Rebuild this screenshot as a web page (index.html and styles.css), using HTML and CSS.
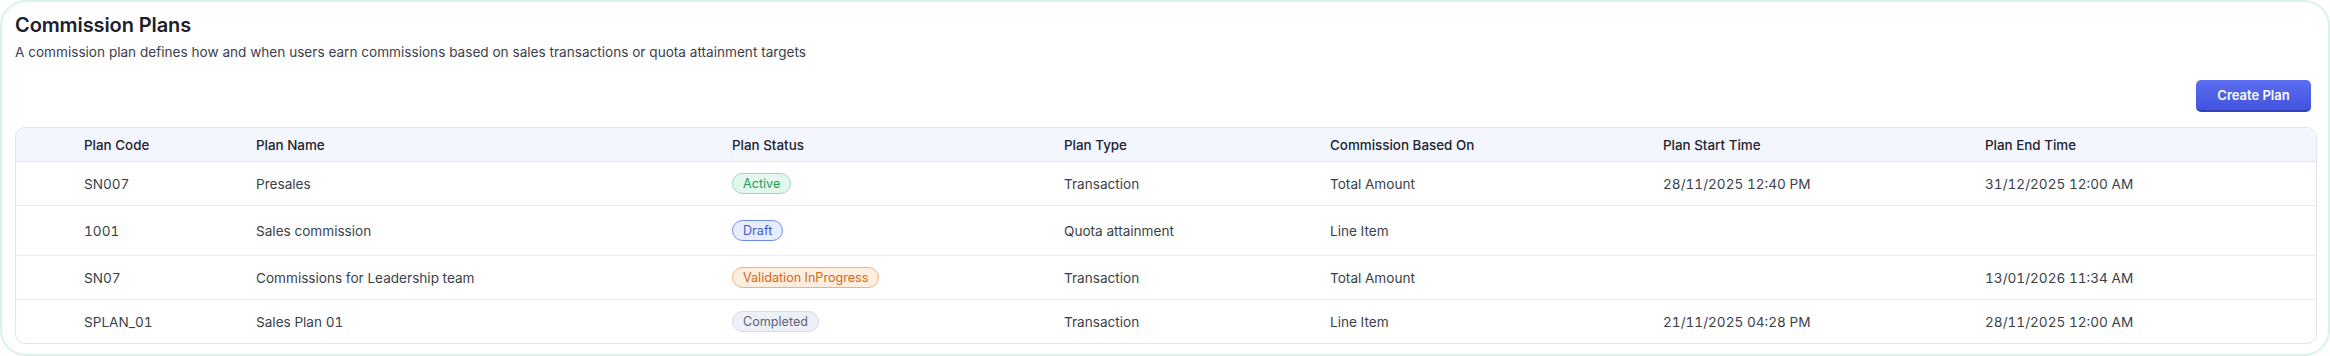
FILE: index.html
```html
<!DOCTYPE html>
<html>
    <head>
        <title>Commission Plans</title>
        <link rel="stylesheet" href="styles.css">
    </head>
    <body>
        <div class="card">
            <h1 class="pageTitle">Commission Plans</h1>
            <p class="pageDesc">A commission plan defines how and when users earn commissions based on sales transactions or quota attainment targets</p>

            <div class="toolbar">
                <button class="primaryBtn">Create Plan</button>
            </div>

            <div class="planTable">
                <div class="row head">
                    <div></div>
                    <div>Plan Code</div>
                    <div>Plan Name</div>
                    <div>Plan Status</div>
                    <div>Plan Type</div>
                    <div>Commission Based On</div>
                    <div>Plan Start Time</div>
                    <div>Plan End Time</div>
                </div>
                <div class="row">
                    <div></div>
                    <div>SN007</div>
                    <div>Presales</div>
                    <div><span class="badge active">Active</span></div>
                    <div>Transaction</div>
                    <div>Total Amount</div>
                    <div>28/11/2025 12:40 PM</div>
                    <div>31/12/2025 12:00 AM</div>
                </div>
                <div class="row tall">
                    <div></div>
                    <div>1001</div>
                    <div>Sales commission</div>
                    <div><span class="badge draft">Draft</span></div>
                    <div>Quota attainment</div>
                    <div>Line Item</div>
                    <div></div>
                    <div></div>
                </div>
                <div class="row">
                    <div></div>
                    <div>SN07</div>
                    <div>Commissions for Leadership team</div>
                    <div><span class="badge progress">Validation InProgress</span></div>
                    <div>Transaction</div>
                    <div>Total Amount</div>
                    <div></div>
                    <div>13/01/2026 11:34 AM</div>
                </div>
                <div class="row">
                    <div></div>
                    <div>SPLAN_01</div>
                    <div>Sales Plan 01</div>
                    <div><span class="badge done">Completed</span></div>
                    <div>Transaction</div>
                    <div>Line Item</div>
                    <div>21/11/2025 04:28 PM</div>
                    <div>28/11/2025 12:00 AM</div>
                </div>
            </div>
        </div>
    </body>
</html>
```

FILE: styles.css
```css
*{
    box-sizing: border-box;
}
body{
    margin: 0;
    background: #ffffff;
    font-family: Inter, 'Noto Sans', sans-serif;
    color: #2b303b;
}
.card{
    width: 2330px;
    height: 356px;
    border: 2px solid #daf3ea;
    border-radius: 26px;
    padding: 11px 11px 10px 13px;
}
.pageTitle{
    margin: 0;
    font-size: 20px;
    line-height: 24px;
    font-weight: 600;
    color: #1d212b;
    letter-spacing: -0.1px;
}
.pageDesc{
    margin: 6px 0 0 0;
    font-size: 13.6px;
    line-height: 18px;
    color: #3b404c;
}
.toolbar{
    display: flex;
    justify-content: flex-end;
    padding: 19px 6px 0 0;
}
.primaryBtn{
    width: 115px;
    height: 32px;
    border: 0;
    border-bottom: 2px solid #3141b8;
    border-radius: 5px;
    background: linear-gradient(#5c6ff2, #4154dc);
    color: #ffffff;
    font-family: Inter, sans-serif;
    font-size: 13px;
    font-weight: 600;
}
.planTable{
    margin-top: 15px;
    border: 1px solid #dfe3ec;
    border-radius: 10px;
    overflow: hidden;
}
.row{
    display: grid;
    grid-template-columns: 68px 172px 476px 332px 266px 333px 322px 1fr;
    align-items: center;
    height: 44px;
    border-bottom: 1px solid #e8ebf1;
    font-size: 13.6px;
    font-variant-numeric: tabular-nums;
    color: #3a3f4b;
}
.row.head{
    height: 34px;
    background: #f3f6fe;
    border-bottom-color: #e2e6f0;
    font-size: 13.4px;
    font-weight: 500;
    color: #1f232d;
}
.row.tall{
    height: 50px;
}
.row:last-child{
    height: 43px;
    border-bottom: 0;
}
.badge{
    display: inline-block;
    height: 21px;
    line-height: 19px;
    padding: 0 10px;
    border: 1px solid;
    border-radius: 11px;
    font-size: 12.6px;
}
.badge.active{
    background: #e2f7ee;
    border-color: #94dcb9;
    color: #1d9c5a;
}
.badge.draft{
    background: #e7eeff;
    border-color: #6e88f2;
    color: #3e5ad9;
}
.badge.progress{
    background: #fdeedf;
    border-color: #efb27f;
    color: #d26a16;
}
.badge.done{
    background: #eef0f8;
    border-color: #d4d8e5;
    color: #5d6477;
}
```
